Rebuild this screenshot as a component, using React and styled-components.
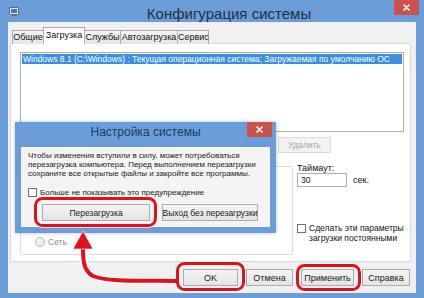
import React from 'react';
import styled, { createGlobalStyle } from 'styled-components';

const GlobalStyle = createGlobalStyle`
    html, body {
        margin: 0;
        padding: 0;
        background: #6b9dd9;
    }
    body {
        font-family: "Liberation Sans", Arial, sans-serif;
    }
`

const Window = styled.div`
    position: relative;
    width: 424px;
    height: 298px;
    background: #6b9dd9;
    display: flex;
    flex-direction: column;
    overflow: hidden;
`

const TitleBar = styled.div`
    height: 22px;
    display: flex;
    align-items: flex-start;
    flex-shrink: 0;
`

const AppIcon = styled.svg`
    margin: 7px 0 0 9px;
    flex-shrink: 0;
`

const Title = styled.div`
    flex: 1;
    text-align: center;
    padding: 5px 0 0 45px;
    font-size: 15px;
    line-height: 17px;
    color: #26303d;
    white-space: nowrap;
`

const CloseButton = styled.div`
    width: ${p => p.w}px;
    height: 15px;
    margin-right: ${p => p.mr}px;
    background: #c9514e;
    display: flex;
    align-items: center;
    justify-content: center;
    flex-shrink: 0;
`

const Body = styled.div`
    flex: 1;
    margin: 0 8px 5px 8px;
    background: #f0f0f0;
    display: flex;
    flex-direction: column;
    padding: 6px 5px 0 2px;
`

const Tabs = styled.div`
    height: 16px;
    display: flex;
    align-items: flex-end;
    padding-left: 2px;
`

const Tab = styled.div`
    position: relative;
    z-index: ${p => p.active ? 2 : 1};
    width: ${p => p.w}px;
    height: ${p => p.active ? 17 : 14}px;
    margin-right: -1px;
    box-sizing: border-box;
    border: 1px solid #acacac;
    border-bottom: none;
    background: ${p => p.active ? '#fff' : 'linear-gradient(#f3f3f3, #e6e6e6)'};
    font-size: 9px;
    line-height: ${p => p.active ? 14 : 12}px;
    text-align: center;
    color: #111;
    white-space: nowrap;
`

const Panel = styled.div`
    height: 219px;
    box-sizing: border-box;
    background: #fff;
    border: 1px solid #d9d9d9;
    margin-top: -1px;
    display: flex;
    flex-direction: column;
    padding: 8px 6px 0 9px;
`

const ListBox = styled.div`
    height: 80px;
    box-sizing: border-box;
    border: 1px solid #abadb3;
    padding: 1px;
`

const ListRow = styled.div`
    height: 10px;
    background: ${p => p.selected ? '#3a8ee6' : 'transparent'};
    color: ${p => p.selected ? '#fff' : '#111'};
    font-size: 8.5px;
    line-height: 10px;
    padding-left: 1px;
    white-space: nowrap;
    overflow: hidden;
`

const ActionRow = styled.div`
    display: flex;
    justify-content: flex-end;
    margin-top: 5px;
    padding-right: 73px;
`

const Button = styled.div`
    width: ${p => p.w}px;
    height: ${p => p.h || 17}px;
    box-sizing: border-box;
    border: 1px solid ${p => p.disabled ? '#dadada' : '#acacac'};
    background: ${p => p.disabled ? '#f2f2f2' : 'linear-gradient(#f4f4f4, #e4e4e4)'};
    color: ${p => p.disabled ? '#a6a6a6' : '#1a1a1a'};
    font-size: ${p => p.fs || 9}px;
    display: flex;
    align-items: center;
    justify-content: center;
    white-space: nowrap;
    flex-shrink: 0;
`

const LowerRow = styled.div`
    display: flex;
    align-items: flex-start;
    gap: 4px;
`

const GroupBox = styled.div`
    width: 273px;
    height: 89px;
    margin-top: 13px;
    box-sizing: border-box;
    border: 1px solid #dcdcdc;
    border-radius: 2px;
    display: flex;
    flex-direction: column;
    justify-content: flex-end;
    padding: 0 0 5px 14px;
`

const Option = styled.div`
    height: 14px;
    display: flex;
    align-items: center;
    gap: 3px;
    font-size: 8.5px;
    color: ${p => p.disabled ? '#8a8a8a' : '#111'};
    white-space: nowrap;
`

const CheckBox = styled.span`
    width: 9px;
    height: 9px;
    box-sizing: border-box;
    border: 1px solid #727272;
    background: #fff;
    flex-shrink: 0;
`

const Radio = styled.span`
    width: 10px;
    height: 10px;
    box-sizing: border-box;
    border-radius: 50%;
    border: 1px solid #bcbcbc;
    background: radial-gradient(circle at 40% 35%, #fafafa, #dedede);
    flex-shrink: 0;
`

const SideColumn = styled.div`
    display: flex;
    flex-direction: column;
    padding-top: 10px;
`

const Label = styled.div`
    font-size: 9px;
    line-height: 10px;
    color: #111;
    white-space: nowrap;
`

const TimeoutRow = styled.div`
    display: flex;
    align-items: center;
    gap: 6px;
`

const TextField = styled.div`
    width: 50px;
    height: 14px;
    box-sizing: border-box;
    border: 1px solid #abadb3;
    background: #fff;
    font-size: 8.5px;
    line-height: 12px;
    padding-left: 3px;
    color: #111;
`

const PersistRow = styled.div`
    display: flex;
    align-items: flex-start;
    gap: 3px;
    margin-top: 36px;
    font-size: 8.5px;
    line-height: 10px;
    color: #111;
    white-space: nowrap;
    ${CheckBox} {
        margin-top: 1px;
    }
`

const Footer = styled.div`
    display: flex;
    justify-content: flex-end;
    gap: 8px;
    margin-top: 7px;
    padding-right: 1px;
`

const Modal = styled.div`
    position: absolute;
    left: 15px;
    top: 122px;
    width: 261px;
    height: 111px;
    background: #6b9dd9;
    box-shadow: 0 0 4px rgba(0, 0, 0, 0.25);
    display: flex;
    flex-direction: column;
    z-index: 5;
`

const ModalTitleBar = styled.div`
    height: 25px;
    display: flex;
    align-items: flex-start;
`

const ModalTitle = styled.div`
    flex: 1;
    text-align: center;
    padding-left: 29px;
    font-size: 12px;
    line-height: 21px;
    color: #1d3b6b;
    white-space: nowrap;
`

const ModalInner = styled.div`
    flex: 1;
    margin: 0 6px 6px 6px;
    background: #f4f4f4;
    padding: 4px 7px 0 7px;
    display: flex;
    flex-direction: column;
`

const Message = styled.div`
    font-size: 8px;
    line-height: 9px;
    color: #1a1a1a;
    white-space: nowrap;
`

const ModalCheck = styled.div`
    display: flex;
    align-items: center;
    gap: 3px;
    height: 10px;
    margin-top: 9px;
    font-size: 8px;
    color: #1a1a1a;
    white-space: nowrap;
`

const ModalButtons = styled.div`
    display: flex;
    gap: 12px;
    margin-top: 7px;
    padding-left: 14px;
`

const Annotations = styled.svg`
    position: absolute;
    left: 0;
    top: 0;
    z-index: 10;
    pointer-events: none;
`

const Cross = () => (
    <svg width="7" height="7" viewBox="0 0 7 7">
        <path d="M1 1 L6 6 M6 1 L1 6" stroke="#fff" strokeWidth="1.6" strokeLinecap="round" />
    </svg>
)

export default function App() {
    return (
        <>
            <GlobalStyle />
            <Window>
                <TitleBar>
                    <AppIcon width="10" height="11" viewBox="0 0 10 11">
                        <rect x="0.5" y="0.5" width="9" height="7" rx="0.5" fill="#e4ebf4" stroke="#5d6c82" />
                        <rect x="2" y="2" width="6" height="4" fill="#3b7dd6" />
                        <rect x="3" y="8" width="4" height="1.2" fill="#5d6c82" />
                        <rect x="1.5" y="9.3" width="7" height="1.4" fill="#8a97aa" />
                    </AppIcon>
                    <Title>Конфигурация системы</Title>
                    <CloseButton w={25} mr={5}><Cross /></CloseButton>
                </TitleBar>

                <Body>
                    <Tabs>
                        <Tab w={32}>Общие</Tab>
                        <Tab w={42} active>Загрузка</Tab>
                        <Tab w={37}>Службы</Tab>
                        <Tab w={58}>Автозагрузка</Tab>
                        <Tab w={32}>Сервис</Tab>
                    </Tabs>

                    <Panel>
                        <ListBox>
                            <ListRow selected>
                                Windows 8.1 (C:\Windows) : Текущая операционная система; Загружаемая по умолчанию ОС
                            </ListRow>
                        </ListBox>

                        <ActionRow>
                            <Button w={53} h={16} fs={8.5} disabled>Удалить</Button>
                        </ActionRow>

                        <LowerRow>
                            <GroupBox>
                                <Option disabled><Radio />Сеть</Option>
                            </GroupBox>

                            <SideColumn>
                                <Label>Таймаут:</Label>
                                <TimeoutRow>
                                    <TextField>30</TextField>
                                    <Label>сек.</Label>
                                </TimeoutRow>
                                <PersistRow>
                                    <CheckBox />
                                    <div>Сделать эти параметры<br />загрузки постоянными</div>
                                </PersistRow>
                            </SideColumn>
                        </LowerRow>
                    </Panel>

                    <Footer>
                        <Button w={55}>OK</Button>
                        <Button w={47}>Отмена</Button>
                        <Button w={53}>Применить</Button>
                        <Button w={48}>Справка</Button>
                    </Footer>
                </Body>

                <Modal>
                    <ModalTitleBar>
                        <ModalTitle>Настройка системы</ModalTitle>
                        <CloseButton w={25} mr={4}><Cross /></CloseButton>
                    </ModalTitleBar>
                    <ModalInner>
                        <Message>
                            Чтобы изменения вступили в силу, может потребоваться<br />
                            перезагрузка компьютера. Перед выполнением перезагрузки<br />
                            сохраните все открытые файлы и закройте все программы.
                        </Message>
                        <ModalCheck><CheckBox />Больше не показывать это предупреждение</ModalCheck>
                        <ModalButtons>
                            <Button w={108} fs={8.5}>Перезагрузка</Button>
                            <Button w={96} fs={8.5}>Выход без перезагрузки</Button>
                        </ModalButtons>
                    </ModalInner>
                </Modal>

                <Annotations width="424" height="298" viewBox="0 0 424 298">
                    <g fill="none" stroke="#fff" strokeWidth="5" opacity="0.7" strokeLinejoin="round">
                        <rect x="35.5" y="198.5" width="120" height="27" rx="7" />
                        <rect x="177.5" y="263.5" width="66" height="26" rx="7" />
                        <rect x="297.5" y="265.5" width="62" height="24" rx="7" />
                        <path d="M177 281 C150 280 110 283 93 276 C84 271 83 262 83 248" strokeWidth="7" />
                    </g>
                    <g fill="none" stroke="#e3101b" strokeWidth="3" strokeLinejoin="round">
                        <rect x="35.5" y="198.5" width="120" height="27" rx="7" />
                        <rect x="177.5" y="263.5" width="66" height="26" rx="7" />
                        <rect x="297.5" y="265.5" width="62" height="24" rx="7" />
                        <path d="M177 281 C150 280 110 283 93 276 C84 271 83 262 83 248" strokeWidth="4" strokeLinecap="round" />
                    </g>
                    <path d="M83 231 L93 249 L73 249 Z" fill="#e3101b" stroke="#fff" strokeWidth="1" strokeOpacity="0.6" />
                </Annotations>
            </Window>
        </>
    );
}
